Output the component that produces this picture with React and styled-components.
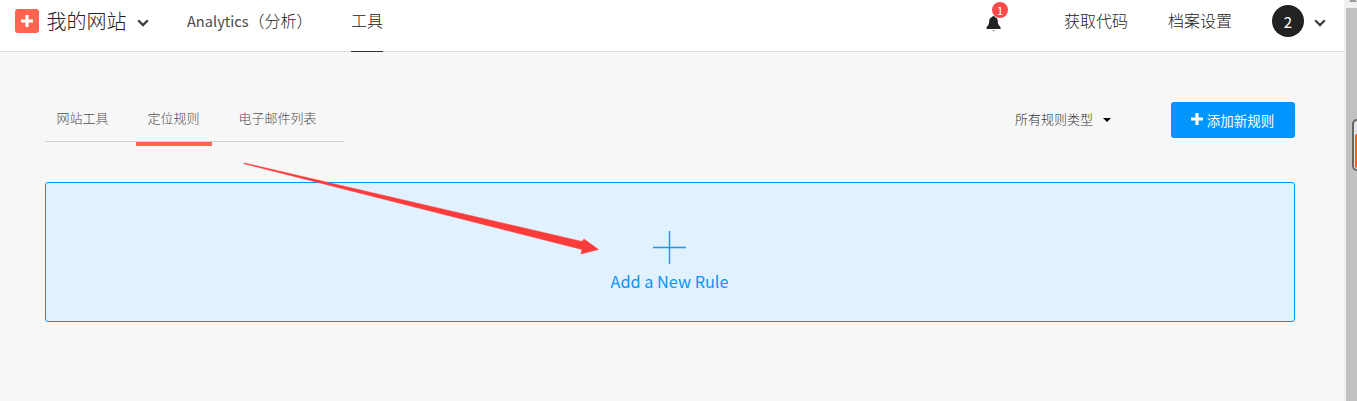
import React from 'react';
import styled, { createGlobalStyle } from 'styled-components';

const GlobalStyle = createGlobalStyle`
  *, *::before, *::after { box-sizing: border-box; }
  html, body { margin: 0; overflow: hidden; }
  body {
    font-family: "Noto Sans CJK SC", "Noto Sans", sans-serif;
    font-weight: 300;
    background: #f7f7f7;
    color: #222;
  }
`;

const Page = styled.div`
  position: relative;
  display: flex;
  width: 1357px;
  height: 401px;
  overflow: hidden;
`;

const Content = styled.div`
  flex: 1;
  min-width: 0;
`;

const Header = styled.header`
  display: flex;
  align-items: stretch;
  height: 52px;
  padding: 0 18px 0 15px;
  background: #fff;
  border-bottom: 1px solid #dcdcdc;
`;

const Site = styled.div`
  display: flex;
  align-items: center;
  height: 42px;
  width: 172px;
  font-size: 20px;
  line-height: 24px;
`;

const Logo = styled.svg`
  display: block;
  margin-right: 7.5px;
`;

const Chevron = styled.svg`
  display: block;
  margin: 3px 0 0 ${(p) => p.$gap}px;
`;

const NavItem = styled.a`
  height: 52px;
  margin-right: ${(p) => p.$gap || 0}px;
  font-size: 16px;
  line-height: 41px;
  white-space: nowrap;
  border-bottom: 1px solid ${(p) => (p.$active ? '#333' : 'transparent')};
`;

const AnalyticsItem = styled(NavItem)`
  width: 116px;
`;

const Latin = styled.span`
  font-size: 14.6px;
  font-weight: 400;
  color: #4a4a4a;
`;

const HeaderRight = styled.div`
  display: flex;
  margin-left: auto;
`;

const Notifications = styled.div`
  position: relative;
  width: 15px;
  height: 42px;
  padding-top: 13px;
  margin-right: 63px;
`;

const Badge = styled.span`
  position: absolute;
  top: 2px;
  left: 6px;
  width: 16px;
  height: 16px;
  border-radius: 50%;
  background: #fc4a4a;
  color: #fff;
  font-size: 11px;
  font-weight: 400;
  line-height: 16px;
  text-align: center;
`;

const Account = styled.div`
  display: flex;
  align-items: center;
  height: 42px;
`;

const Avatar = styled.span`
  width: 32px;
  height: 32px;
  border-radius: 50%;
  background: #222;
  color: #fff;
  font-size: 15px;
  font-weight: 400;
  line-height: 33px;
  text-align: center;
`;

const Main = styled.main`
  padding: 50px 49px 0 45px;
`;

const Toolbar = styled.div`
  display: flex;
  height: 80px;
`;

const Tabs = styled.nav`
  display: flex;
  width: 299px;
  height: 40px;
  border-bottom: 1px solid #d0d0d0;
`;

const Tab = styled.a`
  position: relative;
  flex-shrink: 0;
  padding: 0 12.5px 0 11.5px;
  margin-right: 15px;
  font-size: 13px;
  line-height: 32px;
  color: #4c4c4c;
  white-space: nowrap;

  &::after {
    content: '';
    display: ${(p) => (p.$active ? 'block' : 'none')};
    position: absolute;
    left: 0;
    right: 0;
    top: 40px;
    height: 4px;
    background: #ff6450;
  }
`;

const Filter = styled.div`
  display: flex;
  align-items: center;
  height: 34px;
  margin: 0 60px 0 auto;
  font-size: 13px;
  line-height: 20px;
  color: #333;
`;

const Caret = styled.svg`
  display: block;
  margin: 2px 0 0 10px;
`;

const AddButton = styled.button`
  display: flex;
  align-items: center;
  justify-content: center;
  width: 124px;
  height: 36px;
  padding: 0 1px 0 0;
  border: 0;
  border-radius: 3px;
  background: #0095ff;
  color: #fff;
  font: inherit;
  font-size: 13.5px;
  font-weight: 400;
  line-height: 36px;

  svg { display: block; margin: -3px 4px 0 0; }
`;

const NewRule = styled.section`
  display: flex;
  flex-direction: column;
  align-items: center;
  height: 140px;
  padding: 48px 1px 0 0;
  border: 1px solid #0095ff;
  border-radius: 3px;
  background: #e1f1ff;
  color: #0b94fa;
  font-size: 16.3px;
  font-weight: 400;
  line-height: 26px;

  svg { display: block; margin-bottom: 4px; }
`;

const ScrollTrack = styled.div`
  width: 13px;
  padding: 8px 0 0 2px;
  background: #f0f0f0;
  position: relative;
`;

const ScrollThumb = styled.div`
  height: 393px;
  background: #c1c1c1;
`;

const ScrollArrow = styled.svg`
  position: absolute;
  top: 0;
  left: 5px;
`;

const SideWidget = styled.div`
  position: absolute;
  right: -6px;
  top: 119px;
  width: 11px;
  height: 52px;
  padding: 13px 0 0 1px;
  border: 2px solid #666;
  border-radius: 5px;
  background: #e3e3e3;

  &::before {
    content: '';
    display: block;
    height: 34px;
    border-radius: 2px;
    background: #ff5a1e;
  }
`;

const Pointer = styled.svg`
  position: absolute;
  left: 240px;
  top: 158px;
  pointer-events: none;
`;

function DownChevron({ gap }) {
  return (
    <Chevron $gap={gap} width="12" height="8" viewBox="0 0 12 8">
      <path d="M1.2 1.3 6 6.1l4.8-4.8" fill="none" stroke="#3c3c3c" strokeWidth="2.2" />
    </Chevron>
  );
}

export default function App() {
  return (
    <>
      <GlobalStyle />
      <Page>
        <Content>
          <Header>
            <Site>
              <Logo width="24" height="24" viewBox="0 0 24 24">
                <rect width="24" height="24" rx="3" fill="#ff6450" />
                <path d="M12 6v12M6 12h12" stroke="#fff" strokeWidth="3.2" />
              </Logo>
              <span>我的网站</span>
              <DownChevron gap={10.5} />
            </Site>
            <AnalyticsItem $gap={48}><Latin>Analytics</Latin>（分析）</AnalyticsItem>
            <NavItem $active>工具</NavItem>
            <HeaderRight>
              <Notifications>
                <svg width="15" height="16" viewBox="0 0 15 16">
                  <path
                    d="M7.5 0c.7 0 1.2.5 1.2 1.1 2 .5 3.1 2.1 3.1 4 0 3.2.8 4.1 2.7 5.8V13H.6v-2.1c1.8-1.7 2.6-2.6 2.6-5.8 0-1.9 1.1-3.5 3.1-4C6.3.5 6.8 0 7.5 0Z"
                    fill="#222"
                  />
                  <path d="M6.5 14.5h2.4c-.3 1-2.1 1-2.4 0Z" fill="#222" />
                </svg>
                <Badge>1</Badge>
              </Notifications>
              <NavItem $gap={40}>获取代码</NavItem>
              <NavItem $gap={40}>档案设置</NavItem>
              <Account>
                <Avatar>2</Avatar>
                <DownChevron gap={10} />
              </Account>
            </HeaderRight>
          </Header>
          <Main>
            <Toolbar>
              <Tabs>
                <Tab>网站工具</Tab>
                <Tab $active>定位规则</Tab>
                <Tab>电子邮件列表</Tab>
              </Tabs>
              <Filter>
                所有规则类型
                <Caret width="8" height="4" viewBox="0 0 8 4">
                  <path d="M0 0h8L4 4Z" fill="#000" />
                </Caret>
              </Filter>
              <AddButton>
                <svg width="12" height="12" viewBox="0 0 12 12">
                  <path d="M6 0v12M0 6h12" stroke="#fff" strokeWidth="3.2" />
                </svg>
                <span>添加新规则</span>
              </AddButton>
            </Toolbar>
            <NewRule>
              <svg width="33" height="33" viewBox="0 0 33 33">
                <path d="M16.5 0v33M0 16.5h33" stroke="#1b98f3" strokeWidth="1.4" />
              </svg>
              <span>Add a New Rule</span>
            </NewRule>
          </Main>
        </Content>
        <ScrollTrack>
          <ScrollArrow width="8" height="3" viewBox="0 0 8 3">
            <path d="M1.5 0h5L8 2H0Z" fill="#999" />
          </ScrollArrow>
          <ScrollThumb />
        </ScrollTrack>
        <SideWidget />
        <Pointer width="362" height="100" viewBox="0 0 362 100">
          <path d="M4 4.9 342 83.5 344 81 358.5 91.5 341 96 342 91.5 4 5.7Z" fill="#fc3c3a" stroke="#fc3c3a" strokeWidth=".5" />
        </Pointer>
      </Page>
    </>
  );
}
